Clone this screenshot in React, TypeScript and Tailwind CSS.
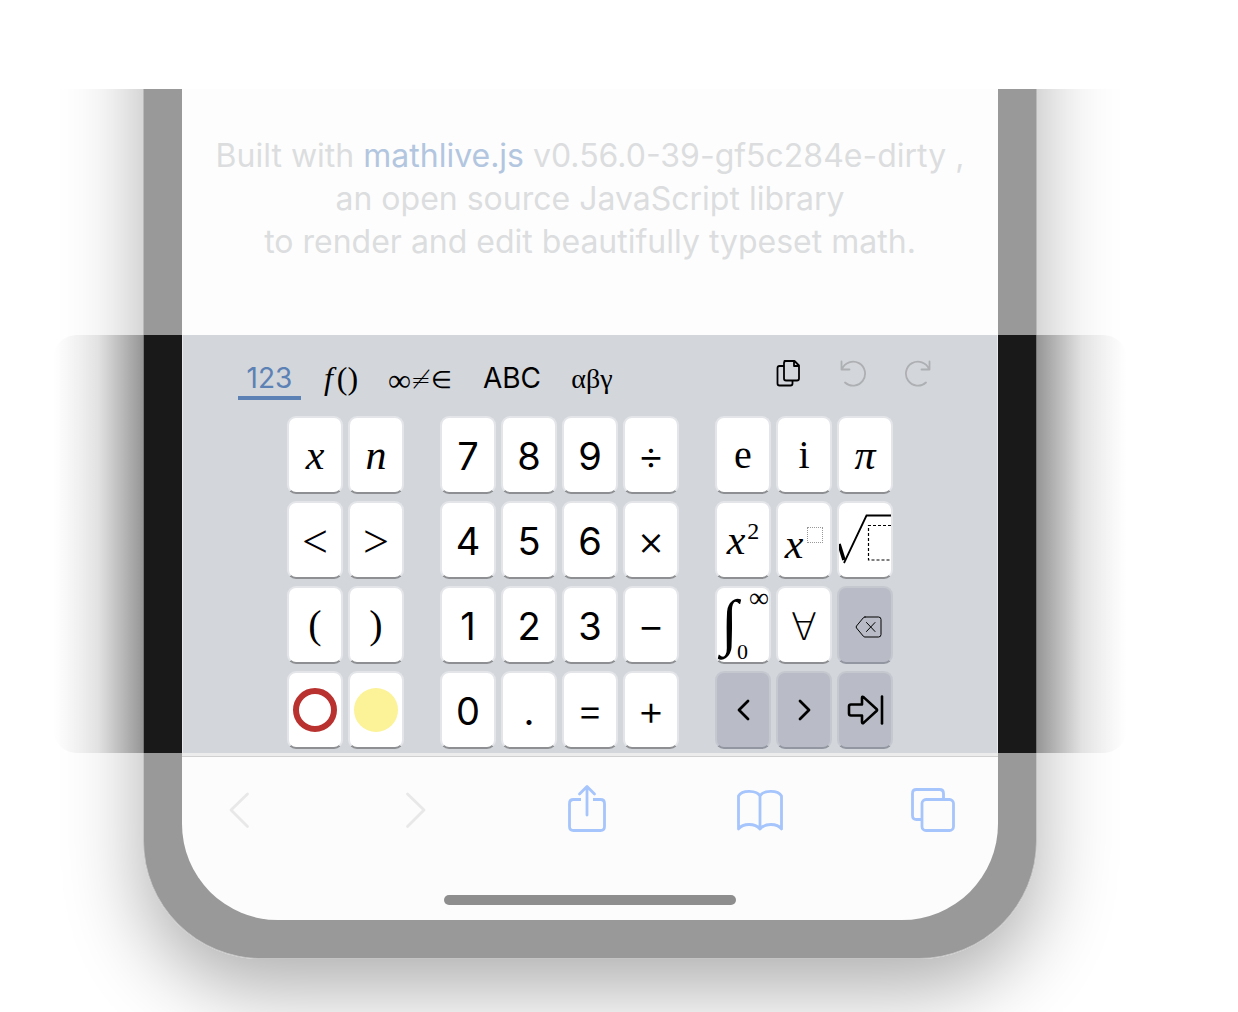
import type { ReactNode } from "react";

const SERIF = "font-['Liberation_Serif',serif]";
const SANS = "font-['Inter',sans-serif]";

type KeyDef = { label: string; face: ReactNode; tone?: "action" };

const italic = (s: string) => (
  <span className={`${SERIF} text-[42px] leading-none italic`}>{s}</span>
);
const roman = (s: string) => (
  <span className={`${SERIF} text-[40px] leading-none`}>{s}</span>
);
const digit = (s: string) => (
  <span className={`${SANS} pt-0.5 text-[38px] leading-none`}>{s}</span>
);
const operator = (s: string) => (
  <span className={`${SANS} text-[42px] leading-none font-light`}>{s}</span>
);
const relation = (s: string) => (
  <span className={`${SERIF} pt-1 text-[46px] leading-none`}>{s}</span>
);
const quantifier = (s: string) => (
  <span className="pt-1 font-['DejaVu_Sans',sans-serif] text-[38px] leading-none font-extralight">{s}</span>
);

const stroke = {
  fill: "none",
  stroke: "currentColor",
  strokeLinecap: "round" as const,
  strokeLinejoin: "round" as const,
};

const Radical = () => (
  <svg viewBox="0 0 52 74" className="h-[74px] w-[52px]" aria-hidden="true">
    <path d="M0 41 5 57" fill="none" stroke="#000" strokeWidth="3.6" />
    <path d="M5 60 27.500 12.500H52" fill="none" stroke="#000" strokeWidth="1.8" />
    <path d="M52 22.500H29.500V57H52" fill="none" stroke="#000" strokeWidth="1.200" strokeDasharray="3 2" />
  </svg>
);

const Integral = () => (
  <span className={`${SERIF} flex h-[74px] w-[52px] text-left leading-none`}>
    <span className="w-[20px] shrink-0 pl-1 text-[62px] leading-[68px] italic">∫</span>
    <span className="flex flex-1 flex-col justify-between pb-px">
      <span className="self-end text-[28px] leading-[20px]">∞</span>
      <span className="text-[22px] leading-[18px]">0</span>
    </span>
  </span>
);

const Backspace = () => (
  <svg viewBox="0 0 28 24" className="mt-1 ml-2 h-6 w-7" strokeWidth="1" {...stroke} aria-hidden="true">
    <path d="M10 2H23.500Q26 2 26 4.500V19.500Q26 22 23.500 22H10Q9 22 8.300 21.200L1.500 13Q.8 12 1.500 11L8.300 2.800Q9 2 10 2Z" />
    <path d="M11.500 7.500 20 16.500M20 7.500 11.500 16.500" />
  </svg>
);

const Chevron = ({ d }: { d: string }) => (
  <svg viewBox="0 0 24 28" className="h-7 w-6" {...stroke} strokeWidth="2.800" aria-hidden="true">
    <path d={d} />
  </svg>
);

const NextField = () => (
  <svg viewBox="0 0 38 32" className="ml-0.5 h-8 w-[38px]" {...stroke} strokeWidth="2.600" aria-hidden="true">
    <path d="M4 10.500H15V4Q15 2 16.800 3.400L29.500 15Q30.500 16 29.500 17L16.800 28.600Q15 30 15 28V21.500H4Q2 21.500 2 19.500V12.500Q2 10.500 4 10.500Z" />
    <path d="M35 2.500V29.500" />
  </svg>
);

const rows: KeyDef[][][] = [
  [
    [{ label: "x", face: italic("x") }, { label: "n", face: italic("n") }],
    [
      { label: "7", face: digit("7") },
      { label: "8", face: digit("8") },
      { label: "9", face: digit("9") },
      { label: "divide", face: operator("÷") },
    ],
    [
      { label: "e", face: roman("e") },
      { label: "i", face: roman("i") },
      { label: "pi", face: italic("π") },
    ],
  ],
  [
    [{ label: "less than", face: relation("<") }, { label: "greater than", face: relation(">") }],
    [
      { label: "4", face: digit("4") },
      { label: "5", face: digit("5") },
      { label: "6", face: digit("6") },
      { label: "times", face: operator("×") },
    ],
    [
      {
        label: "x squared",
        face: (
          <span className={`${SERIF} flex items-start gap-0.5 leading-none`}>
            <i className="text-[42px] leading-none">x</i>
            <span className="text-[24px] leading-none">2</span>
          </span>
        ),
      },
      {
        label: "x to a power",
        face: (
          <span className={`${SERIF} flex items-start gap-1 pt-2 leading-none`}>
            <i className="text-[42px] leading-none">x</i>
            <span className="mt-1 size-4 border border-dotted border-[#999]" />
          </span>
        ),
      },
      { label: "square root", face: <Radical /> },
    ],
  ],
  [
    [{ label: "open parenthesis", face: roman("(") }, { label: "close parenthesis", face: roman(")") }],
    [
      { label: "1", face: digit("1") },
      { label: "2", face: digit("2") },
      { label: "3", face: digit("3") },
      { label: "minus", face: operator("−") },
    ],
    [
      { label: "integral", face: <Integral /> },
      { label: "for all", face: quantifier("∀") },
      { label: "delete", face: <Backspace />, tone: "action" },
    ],
  ],
  [
    [
      { label: "red outline", face: <span className="size-11 shrink-0 rounded-full border-6 border-[#b93230]" /> },
      { label: "yellow highlight", face: <span className="size-11 shrink-0 rounded-full bg-[#fcf297]" /> },
    ],
    [
      { label: "0", face: digit("0") },
      { label: "point", face: digit(".") },
      { label: "equals", face: operator("=") },
      { label: "plus", face: operator("+") },
    ],
    [
      { label: "move left", face: <Chevron d="M17 5 8 14 17 23" />, tone: "action" },
      { label: "move right", face: <Chevron d="M8 5 17 14 8 23" />, tone: "action" },
      { label: "next field", face: <NextField />, tone: "action" },
    ],
  ],
];

function Key({ label, face, tone }: KeyDef) {
  const color =
    tone === "action"
      ? "border-[#c6c8d0] border-b-[#9296a0] bg-[#b9bcc6]"
      : "border-[#e3e5e9] border-b-[#8d8f92] bg-white";
  return (
    <button
      type="button"
      aria-label={label}
      className={`flex h-[78px] w-14 items-center justify-center overflow-hidden rounded-[9px] border-2 text-black ${color}`}
    >
      {face}
    </button>
  );
}

function Toolbar() {
  return (
    <div className="flex h-[81px] items-start justify-between pr-[65px] pl-[55px]">
      <div className="flex h-[65px] items-end">
        <button type="button" className={`${SANS} h-[43px] w-[63px] border-b-4 border-[#5c81b5] pt-1 text-[28px] leading-[35px] text-[#5c81b5]`}>
          123
        </button>
        <button type="button" className={`${SERIF} ml-[18px] h-[43px] w-11 text-[32px] leading-[39px] whitespace-nowrap`}>
          <i className="pr-1">f</i>()
        </button>
        <button type="button" className="ml-6 flex h-[43px] w-[66px] items-center justify-center pt-1 font-['DejaVu_Sans',sans-serif] text-[24px] leading-[39px] font-extralight whitespace-nowrap">
          <span className={`${SERIF} text-[32px]`}>∞</span>≠∈
        </button>
        <button type="button" className={`${SANS} ml-[26px] h-[43px] w-[66px] text-[28px] leading-[41px]`}>
          ABC
        </button>
        <button type="button" className={`${SERIF} ml-5 h-[43px] w-[54px] text-[28px] leading-[37px]`}>
          αβγ
        </button>
      </div>
      <div className="mt-6 flex gap-[37px]">
        <button type="button" aria-label="Copy">
          <svg viewBox="0 0 28 28" className="size-7" {...stroke} strokeWidth="1.800" aria-hidden="true">
            <path d="M10.500 2H20.500L25 6.500V19.500Q25 21.500 23 21.500H12Q10 21.500 10 19.500V4Q10 2 12 2M20 2.500V7H25" />
            <path d="M9.500 7H5.500Q3.500 7 3.500 9V24.500Q3.500 26.500 5.500 26.500H16.500Q18.500 26.500 18.500 24.500V22" />
          </svg>
        </button>
        <button type="button" aria-label="Undo" className="text-[#adafb2]">
          <svg viewBox="0 0 28 28" className="size-7" {...stroke} strokeWidth="1.800" aria-hidden="true">
            <path d="M2.500 2.500V10.500H10.500M3 10A12 12 0 1 1 6 23.500" />
          </svg>
        </button>
        <button type="button" aria-label="Redo" className="text-[#adafb2]">
          <svg viewBox="0 0 28 28" className="size-7" {...stroke} strokeWidth="1.800" aria-hidden="true">
            <path d="M25.500 2.500V10.500H17.500M25 10A12 12 0 1 0 22 23.500" />
          </svg>
        </button>
      </div>
    </div>
  );
}

function Keyboard() {
  return (
    <section aria-label="Math keyboard" className="flex-1 border-x border-[#e9eaec] bg-[#d3d6db]">
      <Toolbar />
      <div className="flex flex-col gap-[7px] pb-1">
        {rows.map((groups, r) => (
          <div key={r} className="flex justify-center gap-9">
            {groups.map((keys, g) => (
              <div key={g} className="flex gap-[5px]">
                {keys.map((k) => (
                  <Key key={k.label} {...k} />
                ))}
              </div>
            ))}
          </div>
        ))}
      </div>
    </section>
  );
}

function BrowserBar() {
  return (
    <nav aria-label="Browser" className="flex justify-between pt-[27px] pr-[41px] pl-[33px] text-[#a6c5fc]">
      <button type="button" aria-label="Back" className="text-[#e8e8e8]">
        <svg viewBox="0 0 48 52" className="h-[52px] w-12" {...stroke} strokeWidth="2.800" aria-hidden="true">
          <path d="M32.500 10 16 26 32.500 42.500" />
        </svg>
      </button>
      <button type="button" aria-label="Forward" className="text-[#e8e8e8]">
        <svg viewBox="0 0 48 52" className="h-[52px] w-12" {...stroke} strokeWidth="2.800" aria-hidden="true">
          <path d="M18.500 10 35 26 18.500 42.500" />
        </svg>
      </button>
      <button type="button" aria-label="Share">
        <svg viewBox="0 0 48 52" className="h-[52px] w-12" {...stroke} strokeWidth="2.800" aria-hidden="true">
          <path d="M25 31V3M17.500 10 25 2.500 32.500 10" />
          <path strokeLinecap="butt" d="M19 15.500H11.500Q7.500 15.500 7.500 19.500V42.500Q7.500 46.500 11.500 46.500H38.500Q42.500 46.500 42.500 42.500V19.500Q42.500 15.500 38.500 15.500H31" />
        </svg>
      </button>
      <button type="button" aria-label="Bookmarks">
        <svg viewBox="0 0 48 52" className="h-[52px] w-12" {...stroke} strokeWidth="2.800" aria-hidden="true">
          <path d="M24 45V12C21 6 6 5.500 2.500 12V45C7 39 19 39 24 45C29 39 41 39 45.500 45V12C42 5.500 27 6 24 12" />
        </svg>
      </button>
      <button type="button" aria-label="Tabs">
        <svg viewBox="0 0 48 52" className="h-[52px] w-12" {...stroke} strokeWidth="2.800" aria-hidden="true">
          <rect x="13" y="15.500" width="31.500" height="31" rx="4" />
          <path d="M12.500 35.500H7.500Q3.500 35.500 3.500 31.500V9.500Q3.500 5.500 7.500 5.500H30.500Q34.500 5.500 34.500 9.500V15" />
        </svg>
      </button>
    </nav>
  );
}

export default function App() {
  return (
    <main className="h-screen overflow-hidden bg-white pt-[89px]">
      <div className="flex h-full justify-center overflow-hidden pr-[58px]">
        <div className="-mt-40 h-fit w-full max-w-[894px] rounded-b-[118px] pt-40 shadow-[0_30px_80px_rgba(0,0,0,0.32)]">
          <section className={`${SANS} border-x border-[#b9b9b9]`}>
            <div className="border-x-38 border-[#999] bg-[#fdfdfd] pt-[45px] pb-[72px] text-center text-[32px] leading-[43px] whitespace-nowrap text-[#dcdddf]">
              <p>
                Built with <a href="#mathlive" className="text-[#b3c6e0]">mathlive.js</a> v0.56.0-39-gf5c284e-dirty ,
              </p>
              <p>an open source JavaScript library</p>
              <p>to render and edit beautifully typeset math.</p>
            </div>
          </section>

          <div className="-mx-[90px] flex">
            <div className="w-[90px] rounded-l-3xl bg-linear-to-r from-transparent via-black/8 to-black/30" />
            <div className="flex flex-1 border-x border-[#777]">
              <div className="flex flex-1 border-x-38 border-[#191919]">
                <Keyboard />
              </div>
            </div>
            <div className="w-[90px] rounded-r-3xl bg-linear-to-l from-transparent via-black/8 to-black/30" />
          </div>

          <div className="rounded-b-[118px] border border-t-0 border-[#c4c4c4] bg-[#999] px-[38px] pb-[38px]">
            <div className="h-[167px] rounded-b-[96px] border-t-3 border-[#ececed] bg-[#fcfcfc]">
              <div className="border-t border-[#d0d0d0]">
                <BrowserBar />
                <div className="mx-auto mt-[59px] h-2.5 w-[292px] rounded-full bg-[#8e8e8e]" />
              </div>
            </div>
          </div>
        </div>
      </div>
    </main>
  );
}
